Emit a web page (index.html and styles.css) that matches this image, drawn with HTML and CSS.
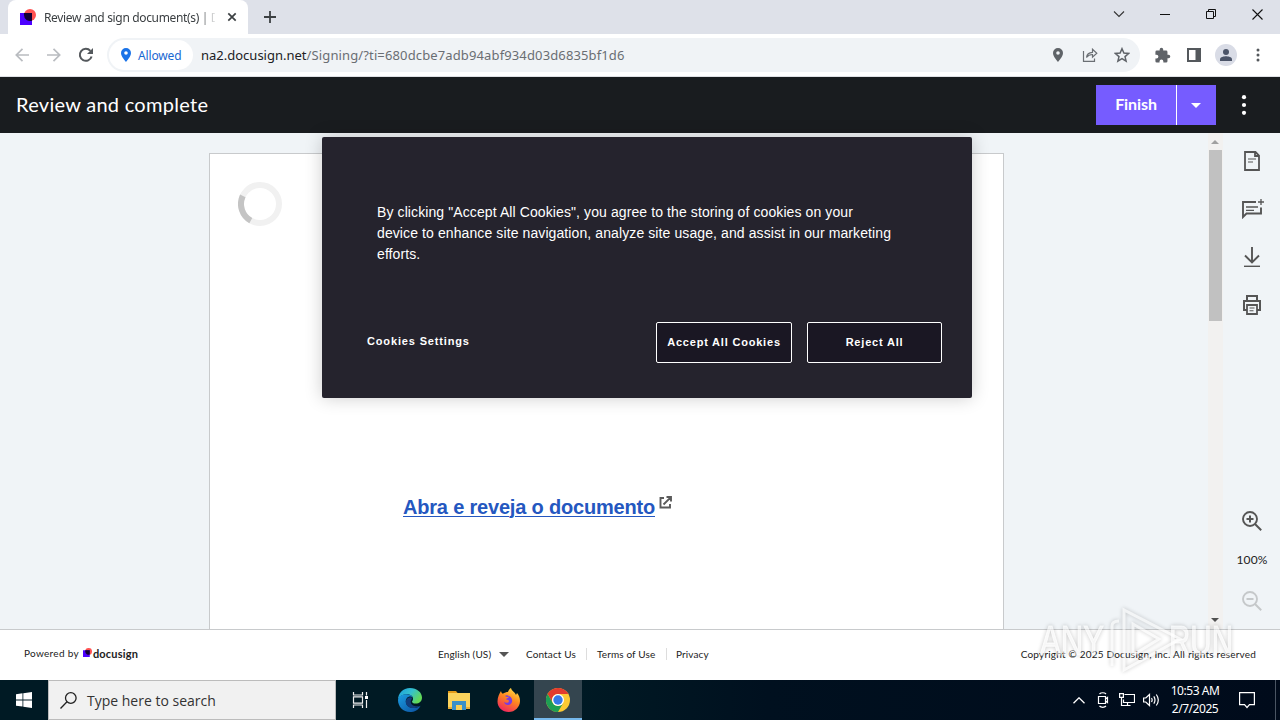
FILE: index.html
```html
<!DOCTYPE html>
<html lang="en">
<head>
    <meta charset="UTF-8">
    <meta name="viewport" content="width=device-width, initial-scale=1.0">
    <title>Review and sign document(s) | Docusign</title>
    <link rel="stylesheet" href="styles.css">
</head>
<body>
    <!-- Tab Strip -->
    <div class="tab-strip">
        <div class="tab">
            <svg class="favicon" width="16" height="16" viewBox="0 0 16 16"><circle cx="10" cy="6" r="6" fill="#ff5252"/><rect y="4" width="12" height="12" fill="#4c00ff"/><path d="M4 4h8v7.7A6 6 0 0 1 4 6z" fill="#130032"/></svg>
            <span class="tab-title">Review and sign document(s) | D</span>
            <svg class="tab-close" width="10" height="10" viewBox="0 0 10 10"><path d="M1.3 1.3l7.4 7.4M8.7 1.3L1.3 8.7" stroke="#3c4043" stroke-width="1.7"/></svg>
        </div>
        <svg class="new-tab" width="12" height="12" viewBox="0 0 12 12"><path d="M6 0v12M0 6h12" stroke="#3c4043" stroke-width="1.8"/></svg>
        <div class="window-controls">
            <span><svg width="12" height="8" viewBox="0 0 12 8"><path d="M1 1.5l5 5 5-5" fill="none" stroke="#333" stroke-width="1.1"/></svg></span>
            <span><svg width="10" height="10" viewBox="0 0 10 10"><path d="M0 5.5h10" stroke="#111"/></svg></span>
            <span><svg width="10" height="10" viewBox="0 0 10 10"><path d="M.5 2.5h7v7h-7zM2.5 2.5v-2h7v7h-2" fill="none" stroke="#111"/></svg></span>
            <span><svg width="11" height="11" viewBox="0 0 11 11"><path d="M.5.5l10 10M10.5.5l-10 10" stroke="#111" stroke-width="1.1"/></svg></span>
        </div>
    </div>

    <!-- Address Bar -->
    <div class="toolbar">
        <span class="tool"><svg width="14" height="14" viewBox="0 0 14 14"><path d="M14 7H1.5M7.5 .8L1.3 7l6.2 6.2" fill="none" stroke="#b9bcc0" stroke-width="1.7"/></svg></span>
        <span class="tool"><svg width="14" height="14" viewBox="0 0 14 14"><path d="M0 7h12.500M6.500 .8L12.700 7l-6.200 6.200" fill="none" stroke="#b9bcc0" stroke-width="1.7"/></svg></span>
        <span class="tool"><svg width="16" height="16" viewBox="0 0 16 16"><path d="M13.600 9.500A6 6 0 1 1 12.400 3.900" fill="none" stroke="#54585c" stroke-width="2"/><path d="M15 1v6H9z" fill="#54585c"/></svg></span>
        <div class="address">
            <div class="chip">
                <svg width="10" height="14" viewBox="0 0 10 14"><path d="M5 0a5 5 0 0 0-5 5c0 3.600 5 9 5 9s5-5.400 5-9a5 5 0 0 0-5-5zm0 3.200a1.800 1.800 0 1 1 0 3.600 1.800 1.800 0 0 1 0-3.600z" fill="#1a73e8"/></svg>
                <span>Allowed</span>
            </div>
            <div class="url"><b>na2.docusign.net</b>/Signing/?ti=680dcbe7adb94abf934d03d6835bf1d6</div>
            <span class="tool"><svg width="10" height="14" viewBox="0 0 10 14"><path d="M5 0a5 5 0 0 0-5 5c0 3.600 5 9 5 9s5-5.400 5-9a5 5 0 0 0-5-5zm0 3.200a1.800 1.800 0 1 1 0 3.600 1.800 1.800 0 0 1 0-3.600z" fill="#5f6368"/></svg></span>
            <span class="tool"><svg width="16" height="14" viewBox="0 0 16 14"><path d="M1.500 3v10.300h11V10.500M4.500 9.500c.4-3.500 2.500-5 6-5.200V1.200l4.300 4-4.300 4V6.500c-2.700 0-4.500.8-6 3z" fill="none" stroke="#6b6f74" stroke-width="1.200"/></svg></span>
            <span class="tool"><svg width="16" height="16" viewBox="0 0 16 16"><path d="M8 1.700l1.900 4.400 4.700.4-3.600 3.100 1.100 4.600L8 11.700l-4.100 2.500L5 9.600 1.400 6.500l4.700-.4z" fill="none" stroke="#5f6368" stroke-width="1.500"/></svg></span>
        </div>
        <div class="toolbar-right">
            <span class="tool"><svg width="17" height="17" viewBox="0 0 24 24"><path d="M20.500 11H19V7a2 2 0 0 0-2-2h-4V3.500a2.500 2.500 0 0 0-5 0V5H4a2 2 0 0 0-2 2v3.800h1.500a2.700 2.700 0 0 1 0 5.400H2V20a2 2 0 0 0 2 2h3.800v-1.500a2.700 2.700 0 0 1 5.400 0V22H17a2 2 0 0 0 2-2v-4h1.500a2.500 2.500 0 0 0 0-5z" fill="#5f6368"/></svg></span>
            <span class="tool"><svg width="14" height="14" viewBox="0 0 14 14"><path d="M0 0h14v14H0zM2 2v10h6.500V2z" fill="#54585c" fill-rule="evenodd"/></svg></span>
            <span class="avatar"><svg width="12" height="12" viewBox="0 0 12 12"><circle cx="6" cy="3" r="3" fill="#4b5468"/><path d="M0 12V10.200C0 8 4 7.300 6 7.300s6 .7 6 2.900V12z" fill="#4b5468"/></svg></span>
            <span class="tool"><svg width="4" height="14" viewBox="0 0 4 14" fill="#54585c"><circle cx="2" cy="2" r="1.500"/><circle cx="2" cy="7" r="1.500"/><circle cx="2" cy="12" r="1.500"/></svg></span>
        </div>
    </div>

    <!-- Signing Header -->
    <div class="signing-header">
        <h1>Review and complete</h1>
        <div class="finish-group">
            <button class="finish-btn">Finish</button>
            <button class="finish-menu"><svg width="10" height="5" viewBox="0 0 10 5"><path d="M0 0h10L5 5z" fill="#fff"/></svg></button>
        </div>
        <svg class="more" width="6" height="20" viewBox="0 0 6 20" fill="#fff"><circle cx="3" cy="2.200" r="2.100"/><circle cx="3" cy="10" r="2.100"/><circle cx="3" cy="17.800" r="2.100"/></svg>
    </div>

    <!-- Document Area -->
    <div class="main">
        <div class="viewer">
            <div class="page">
                <svg class="spinner" width="44" height="44" viewBox="0 0 44 44" fill="none" stroke-width="6"><circle cx="22" cy="22" r="19" stroke="#f1f1f1"/><path d="M4.800 13.900A19 19 0 0 0 12.800 38.600" stroke="#c4c4c4"/></svg>
                <div class="doc-link">
                    <a href="#">Abra e reveja o documento</a>
                    <svg width="13" height="13" viewBox="0 0 13 13"><path d="M5 2H1.500v9.500H11V8M7.500 1h4.500v4.500M11.700 1.300L4.500 8.500" fill="none" stroke="#5a5a5a" stroke-width="1.900"/></svg>
                </div>
            </div>
        </div>
        <div class="scrollbar">
            <svg width="8" height="4" viewBox="0 0 8 4"><path d="M0 4h8L4 0z" fill="#a0a0a0"/></svg>
            <div class="thumb"></div>
            <svg class="scroll-down" width="8" height="4" viewBox="0 0 8 4"><path d="M0 0h8L4 4z" fill="#505050"/></svg>
        </div>
        <div class="sidebar">
            <span><svg width="16" height="20" viewBox="0 0 16 20"><path d="M1 1h10.500L15 4.500V19H1zM11 1v4h4" fill="none" stroke="#555" stroke-width="1.800"/><path d="M4 8h8M4 11h5" stroke="#555" stroke-width="1.200"/></svg></span>
            <span><svg class="comment" width="24" height="20" viewBox="0 0 24 20"><path d="M15 3H2v15l3.500-3.500H20V8.500" fill="none" stroke="#555" stroke-width="1.900"/><path d="M5 8h12M5 11.300h8M20 0v6M17 3h6" stroke="#555" stroke-width="1.300"/></svg></span>
            <span><svg width="18" height="20" viewBox="0 0 18 20"><path d="M9 0v15M2 8.500l7 7 7-7" fill="none" stroke="#555" stroke-width="1.900"/><path d="M1 19.300h16" stroke="#555" stroke-width="1.400"/></svg></span>
            <span><svg width="18" height="20" viewBox="0 0 18 20"><path d="M4 5.500V1h10v4.500M4 15H1V6h16v9h-3" fill="none" stroke="#555" stroke-width="2"/><path d="M4 10h10v9H4z" fill="none" stroke="#555" stroke-width="1.800"/><path d="M6.500 13h5M6.500 15.800h4" stroke="#555" stroke-width="1.100"/></svg></span>
            <span class="zoom-in"><svg width="20" height="20" viewBox="0 0 20 20"><path d="M8 4.500v7M4.500 8h7M13 13l6.200 6.200" stroke="#555" stroke-width="2"/><circle cx="8" cy="8" r="7" fill="none" stroke="#555" stroke-width="1.900"/></svg></span>
            <div class="zoom-level">100%</div>
            <span class="zoom-out"><svg width="20" height="20" viewBox="0 0 20 20"><path d="M4.500 8h7M13 13l6.200 6.200" stroke="#c5c8ca" stroke-width="2"/><circle cx="8" cy="8" r="7" fill="none" stroke="#c5c8ca" stroke-width="1.900"/></svg></span>
        </div>
    </div>

    <!-- Footer -->
    <div class="footer">
        <div class="powered">
            <span>Powered by</span>
            <svg width="9" height="9" viewBox="0 0 16 16"><circle cx="10" cy="6" r="6" fill="#ff5252"/><rect y="4" width="12" height="12" fill="#4c00ff"/><path d="M4 4h8v7.700A6 6 0 0 1 4 6z" fill="#130032"/></svg>
            <b>docusign</b>
        </div>
        <div class="footer-links">
            <span class="language">English (US)</span>
            <svg width="10" height="5" viewBox="0 0 10 5"><path d="M0 0h10L5 5z" fill="#555"/></svg>
            <a class="contact" href="#">Contact Us</a>
            <a class="terms" href="#">Terms of Use</a>
            <a class="privacy" href="#">Privacy</a>
        </div>
        <div class="copyright">Copyright © 2025 Docusign, Inc. All rights reserved</div>
    </div>

    <!-- Taskbar -->
    <div class="taskbar">
        <div class="start"><svg width="16" height="16" viewBox="0 0 16 16"><path d="M0 2.200l6.500-.9v6.200H0zM7.300 1.200L16 0v7.500H7.300zM0 8.400h6.500v6.200L0 13.700zM7.300 8.400H16V16l-8.700-1.200z" fill="#fff"/></svg></div>
        <div class="search">
            <svg width="17" height="17" viewBox="0 0 17 17"><circle cx="10.800" cy="6" r="5.300" fill="none" stroke="#222" stroke-width="1.300"/><path d="M7 9.800L.5 16.500" stroke="#222" stroke-width="1.300"/></svg>
            <span>Type here to search</span>
        </div>
        <div class="apps">
            <span><svg width="17" height="16" viewBox="0 0 17 16"><path d="M1.500 0v3h9V0M1.500 16v-3h9v3M1.500 4.800h9v6.400h-9zM14.500 0v3.500M14.500 8v8" fill="none" stroke="#eee" stroke-width="1.200"/><path d="M13 4h3v3h-3z" fill="#fff"/></svg></span>
            <span><svg width="24" height="24" viewBox="0 0 24 24">
                <defs>
                    <linearGradient id="edgeTop" x1="0" y1="0" x2="1" y2=".5"><stop offset="0" stop-color="#199bdf"/><stop offset=".55" stop-color="#35c1ce"/><stop offset="1" stop-color="#62d957"/></linearGradient>
                    <linearGradient id="edgeBody" x1="0" y1="0" x2="1" y2="1"><stop offset="0" stop-color="#1b9de2"/><stop offset="1" stop-color="#0b4f9e"/></linearGradient>
                </defs>
                <path d="M0 12C0 5 5 0 12 0c7 0 12 4.500 12 9.500 0 4-3 6-6.200 6-2.600 0-3.800-1-3.800-1.800 0-.7 1-1 1-3C15 8 12 6.300 9 6.300 4 6.300.5 9 0 12z" fill="url(#edgeTop)"/>
                <path d="M0 12c.3-3.600 4-5.700 8.500-5.700 3 0 5.500 1.200 6.300 3-4-2-7 .7-7 4.200 0 5.500 7.700 9 14.700 4.200C20.500 22 16.500 24 12 24 5 24 0 18.500 0 12z" fill="url(#edgeBody)"/>
                <path d="M12.500 9.300c-3.500.4-4.700 2.700-4.700 4.700 0 5.500 7.700 8.500 14.700 3.700-4 1.500-9.800 0-9.800-4 0-1.800 1.300-2.200 1.300-3.400 0-.6-.7-1-1.500-1z" fill="#123d7c"/>
            </svg></span>
            <span><svg width="22" height="19" viewBox="0 0 22 19"><path d="M0 0h8l2 2.500H0z" fill="#e49b18"/><path d="M0 2h22v16H0z" fill="#fbd35c"/><path d="M4 10h14v9H4z" fill="#3a90c8"/><path d="M8 14h6v5H8z" fill="#f9cf55"/><path d="M0 16h4v2H0zM18 16h4v2h-4z" fill="#e9ae38"/></svg></span>
            <span><svg width="24" height="24" viewBox="0 0 24 24">
                <defs><linearGradient id="fox" x1=".8" y1="0" x2=".3" y2="1"><stop offset="0" stop-color="#ffe14a"/><stop offset=".45" stop-color="#ff8a1e"/><stop offset="1" stop-color="#f0245f"/></linearGradient></defs>
                <path d="M4 3c.2 1.500 1 2.300 1.800 2.800C7.500 4.500 9.500 4 11 4c.5-1.800 2-3.500 3-4 .5 3 4 4 5 7l1-2c2 2.300 3 5 3 8 0 6-5 11-11.300 11S.5 19.500.5 13.500C.5 9.500 2.200 5.500 4 3z" fill="url(#fox)"/>
                <path d="M8 8c1.500 1 2.500 1 4 .8-.8 1.500-3 1.700-3 2.700 2.500-.2 3.500 1.500 2.500 2.700-1 1-3.500.8-4.500-.4.500 3 3.500 3.800 5.500 2.900 3.800-1.600 3.500-7-.5-8.700C10.500 7 9 7 8 8z" fill="#7a3be0"/>
            </svg></span>
            <span class="active"><svg width="24" height="24" viewBox="0 0 24 24"><circle cx="12" cy="12" r="12" fill="#fcc934"/><path d="M1.600 6A12 12 0 0 1 22.400 6H12a6 6 0 0 0-5.200 9z" fill="#e33b2e"/><path d="M1.600 6A12 12 0 0 0 12 24l5.200-9A6 6 0 0 1 6.800 15z" fill="#1e9e54"/><circle cx="12" cy="12" r="6" fill="#fff"/><circle cx="12" cy="12" r="4.700" fill="#3579e8"/></svg></span>
        </div>
        <div class="tray">
            <span><svg width="12" height="7" viewBox="0 0 12 7"><path d="M.5 6.300L6 .8l5.500 5.500" fill="none" stroke="#fff" stroke-width="1.300"/></svg></span>
            <span><svg width="12" height="16" viewBox="0 0 12 16"><path d="M1.500 4.500h7v7h-7zM8.500 7l2-1.500v5L8.500 9M2.500 2C4 .3 7.500.3 9 2M2.500 14c1.500 1.700 5 1.700 6.500 0" fill="none" stroke="#fff" stroke-width="1.200"/></svg></span>
            <span><svg width="16" height="14" viewBox="0 0 16 14"><path d="M5.500 1.500h10v8h-11V6.500M2.500 4v8.500h9M8.500 9.500v3M.6.600h3.800v3.800H.6z" fill="none" stroke="#fff" stroke-width="1.200"/></svg></span>
            <span><svg width="17" height="14" viewBox="0 0 17 14"><path d="M.6 5h2.200L6.500 1.500v11L2.800 9H.6zM8.500 5q1.300 2 0 4M10.800 3.300q2.400 3.700 0 7.400M13.300 1.500q4 5.500 0 11" fill="none" stroke="#fff" stroke-width="1.200"/></svg></span>
        </div>
        <div class="clock">10:53 AM<br>2/7/2025</div>
        <div class="notifications"><svg width="16" height="17" viewBox="0 0 16 17"><path d="M.6.600h14.800v12H10.500L8 15.500 5.500 12.600H.6z" fill="none" stroke="#fff" stroke-width="1.200"/></svg></div>
    </div>

    <!-- Cookie Banner -->
    <div class="cookie-banner">
        <p>By clicking "Accept All Cookies", you agree to the storing of cookies on your<br>device to enhance site navigation, analyze site usage, and assist in our marketing<br>efforts.</p>
        <div class="cookie-actions">
            <a href="#">Cookies Settings</a>
            <button>Accept All Cookies</button>
            <button class="reject">Reject All</button>
        </div>
    </div>

    <!-- Watermark -->
    <div class="watermark">
        <svg width="200" height="68" viewBox="0 0 200 68">
            <text x="4" y="49" textLength="64" lengthAdjust="spacingAndGlyphs">ANY</text>
            <path d="M88 59V4l56 29-56 31V48M97 18v31l26-16zM76 60V20q0-5 7-5" />
            <text x="133" y="49" textLength="64" lengthAdjust="spacingAndGlyphs">RUN</text>
        </svg>
    </div>
</body>
</html>
```
FILE: styles.css
```css
* {
    box-sizing: border-box;
}

body {
    margin: 0;
    width: 1280px;
    height: 720px;
    display: flex;
    flex-direction: column;
    position: relative;
    overflow: hidden;
    background: white;
    font-family: "Noto Sans", sans-serif;
}

svg {
    display: block;
    flex: none;
}

button {
    margin: 0;
    padding: 0;
    border: none;
    font-family: inherit;
}

/* Tab Strip */
.tab-strip {
    height: 34px;
    flex: none;
    display: flex;
    align-items: center;
    background: #dee1e9;
}

.tab {
    width: 240px;
    height: 34px;
    margin-left: 8px;
    padding: 0 11px 0 12px;
    display: flex;
    align-items: center;
    background: white;
    border-radius: 8px 8px 0 0;
}

.tab-title {
    width: 171px;
    margin-left: 8px;
    white-space: nowrap;
    font-size: 12px;
    letter-spacing: -0.34px;
    color: #3c4043;
    -webkit-mask-image: linear-gradient(to right, black 155px, transparent 173px);
    mask-image: linear-gradient(to right, black 155px, transparent 173px);
}

.tab-close {
    margin-left: 12px;
}

.new-tab {
    margin-left: 16px;
}

.window-controls {
    margin-left: auto;
    height: 34px;
    display: flex;
    padding-bottom: 6px;
}

.window-controls span {
    width: 46px;
    display: flex;
    align-items: center;
    justify-content: center;
}

/* Address Bar */
.toolbar {
    height: 43px;
    flex: none;
    display: flex;
    align-items: center;
    padding-left: 6px;
    border-bottom: 1px solid #dfe1e5;
}

.tool {
    width: 32px;
    height: 32px;
    flex: none;
    display: flex;
    align-items: center;
    justify-content: center;
}

.address {
    width: 1033px;
    height: 34px;
    margin-left: 5px;
    padding: 0 2px;
    display: flex;
    align-items: center;
    background: #f0f3f6;
    border-radius: 17px;
}

.chip {
    width: 84px;
    height: 30px;
    display: flex;
    align-items: center;
    padding-left: 12px;
    gap: 7px;
    background: white;
    border-radius: 15px;
    font-size: 12px;
    letter-spacing: -0.15px;
    color: #1a67d2;
}

.url {
    flex: 1;
    margin-left: 8px;
    white-space: nowrap;
    font-size: 13px;
    letter-spacing: 0.13px;
    color: #6a6e73;
}

.url b {
    font-weight: normal;
    letter-spacing: 0;
    color: #202124;
}

.toolbar-right {
    display: flex;
    align-items: center;
    margin-left: 6px;
}

.avatar {
    width: 22px;
    height: 22px;
    margin: 0 5px;
    display: flex;
    align-items: center;
    justify-content: center;
    background: #d9dce6;
    border-radius: 50%;
}

/* Signing Header */
.signing-header {
    height: 56px;
    flex: none;
    display: flex;
    align-items: center;
    padding: 0 33px 0 16px;
    background: #191c1f;
    font-family: Lato, sans-serif;
}

.signing-header h1 {
    margin: 0;
    padding-bottom: 3px;
    flex: 1;
    font-size: 20px;
    font-weight: normal;
    letter-spacing: 0.28px;
    color: white;
}

.finish-group {
    display: flex;
    gap: 1px;
    background: white;
}

.finish-btn,
.finish-menu {
    height: 40px;
    background: #765cff;
}

.finish-btn {
    width: 80px;
    padding-bottom: 3px;
    font-size: 16px;
    font-weight: bold;
    letter-spacing: -0.1px;
    color: white;
}

.finish-menu {
    width: 39px;
    padding-right: 1px;
    display: flex;
    align-items: center;
    justify-content: center;
}

.more {
    margin-left: 25px;
}

/* Document Area */
.main {
    height: 496px;
    flex: none;
    display: flex;
    background: #f0f4f7;
}

.viewer {
    width: 1208px;
    padding: 20px 0 0 209px;
}

.page {
    width: 795px;
    height: 476px;
    padding: 28px;
    background: white;
    border: 1px solid #c8cacc;
    border-bottom: none;
}

.doc-link {
    display: flex;
    gap: 4px;
    margin: 269px 0 0 165px;
    font-family: "Liberation Sans", sans-serif;
    font-size: 20px;
    line-height: 24px;
    letter-spacing: -0.19px;
}

.doc-link a {
    font-weight: bold;
    color: #2457c0;
    text-decoration-thickness: 1px;
    text-underline-offset: 2px;
}

.doc-link svg {
    margin-top: 1px;
}

.scrollbar {
    width: 15px;
    padding: 7px 1px 7px 0;
    display: flex;
    flex-direction: column;
    align-items: center;
    background: #f2f1f0;
}

.thumb {
    width: 13px;
    height: 171px;
    margin-top: 6px;
    background: #c1c1c1;
}

.scroll-down {
    margin-top: auto;
}

.sidebar {
    width: 57px;
    padding: 4px 0 0 1px;
    display: flex;
    flex-direction: column;
    align-items: center;
    font-family: Lato, sans-serif;
}

.sidebar span {
    height: 48px;
    display: flex;
    align-items: center;
}

.sidebar .comment {
    margin-left: 2px;
}

.sidebar .zoom-in {
    margin-top: 168px;
}

.zoom-level {
    height: 32px;
    line-height: 30px;
    font-size: 12px;
    letter-spacing: 0.1px;
    color: #222;
}

/* Footer */
.footer {
    height: 51px;
    flex: none;
    display: flex;
    align-items: center;
    padding: 0 24px 2px;
    border-top: 1px solid #c8cacc;
    font-family: Lato, sans-serif;
    font-size: 10px;
    color: #222;
}

.powered {
    width: 414px;
    padding-bottom: 2px;
    display: flex;
    align-items: center;
    letter-spacing: 0.3px;
}

.powered svg {
    margin: 0 1px 1px 4px;
}

.powered b {
    font-size: 11px;
    letter-spacing: 0.2px;
}

.footer-links {
    display: flex;
    align-items: center;
    letter-spacing: 0.12px;
}

.footer-links a {
    color: #222;
    text-decoration: none;
}

.language {
    width: 61px;
}

.contact {
    width: 61px;
    margin-left: 17px;
    border-right: 1px solid #ddd;
}

.terms {
    width: 80px;
    padding-left: 10px;
    border-right: 1px solid #ddd;
}

.privacy {
    padding-left: 9px;
}

.copyright {
    margin-left: auto;
    letter-spacing: 0.2px;
}

/* Taskbar */
.taskbar {
    height: 40px;
    flex: none;
    display: flex;
    background: linear-gradient(to right, #001a24, #001a24 45%, #00101f 60%, #000b1b);
    color: white;
}

.start {
    width: 48px;
    display: flex;
    align-items: center;
    justify-content: center;
}

.search {
    width: 288px;
    display: flex;
    align-items: center;
    gap: 10px;
    padding-left: 11px;
    background: #f1f1f1;
    border: 1px solid #bcbcbc;
    font-family: "Open Sans", sans-serif;
    font-size: 14px;
    color: #333;
}

.apps {
    width: 246px;
    display: flex;
    justify-content: space-between;
}

.apps span {
    width: 48px;
    display: flex;
    align-items: center;
    justify-content: center;
}

.apps .active {
    background: #34454f;
    border-bottom: 2px solid #76b9ed;
    padding-top: 2px;
}

.tray {
    margin-left: auto;
    display: flex;
}

.tray span {
    width: 24px;
    display: flex;
    align-items: center;
    justify-content: center;
}

.clock {
    width: 64px;
    padding-top: 2px;
    text-align: center;
    font-size: 12px;
    line-height: 18px;
    letter-spacing: -0.45px;
}

.notifications {
    width: 49px;
    margin-right: 4px;
    padding-left: 12px;
    display: flex;
    align-items: center;
    border-right: 1px solid #4a5563;
}

/* Cookie Banner */
.cookie-banner {
    position: absolute;
    left: 322px;
    top: 137px;
    width: 650px;
    height: 261px;
    padding: 65px 30px 35px 45px;
    display: flex;
    flex-direction: column;
    justify-content: space-between;
    background: #25232d;
    border-radius: 2px;
    box-shadow: 0 0 18px rgba(0, 0, 0, 0.2);
    font-family: "Liberation Sans", sans-serif;
    color: white;
}

.cookie-banner p {
    margin: 0 0 0 10px;
    font-size: 14px;
    line-height: 21px;
    letter-spacing: 0.1px;
    white-space: nowrap;
}

.cookie-actions {
    display: flex;
    align-items: center;
    gap: 15px;
    font-size: 11px;
    font-weight: bold;
    letter-spacing: 0.85px;
}

.cookie-actions a {
    margin-right: auto;
    padding-bottom: 4px;
    color: white;
    text-decoration: none;
}

.cookie-actions button {
    width: 136px;
    height: 41px;
    padding-bottom: 2px;
    background: #1a1723;
    border: 1px solid white;
    border-radius: 2px;
    font-size: 11px;
    font-weight: bold;
    letter-spacing: 0.8px;
    color: white;
}

.cookie-actions .reject {
    width: 135px;
}

/* Watermark */
.watermark {
    position: absolute;
    left: 1036px;
    top: 606px;
    opacity: 0.65;
    filter: drop-shadow(0 0 2px rgba(0, 0, 0, 0.4));
}

.watermark text {
    font-family: "Liberation Sans", sans-serif;
    font-size: 42px;
    fill: rgba(255, 255, 255, 0.8);
    stroke: rgba(255, 255, 255, 0.8);
}

.watermark path {
    fill: none;
    stroke: rgba(255, 255, 255, 0.8);
    stroke-width: 3;
}
```
